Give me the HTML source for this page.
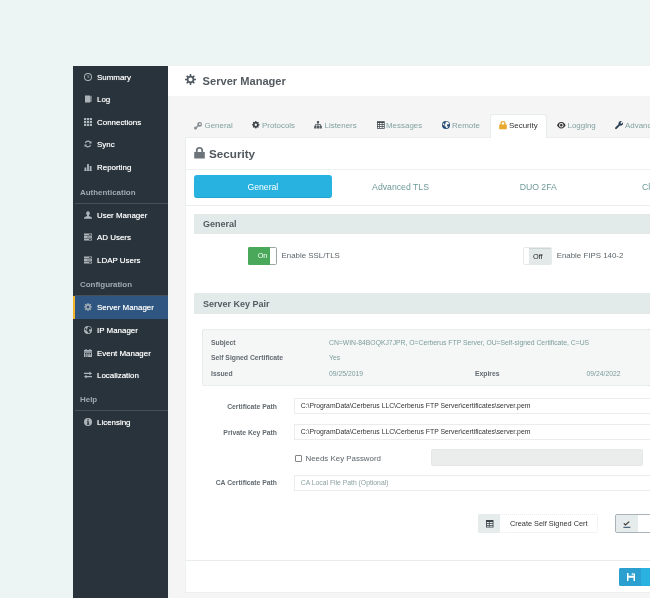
<!DOCTYPE html>
<html><head><meta charset="utf-8">
<style>
*{box-sizing:border-box;margin:0;padding:0}
html,body{width:650px;height:598px;overflow:hidden;background:#edf4f4;font-family:"Liberation Sans",sans-serif;}
body{will-change:transform}
svg{display:block;position:absolute;overflow:visible}
#side{position:absolute;left:73px;top:66px;width:95px;height:532px;background:#28333b;}
.nav{position:absolute;left:0;width:95px;height:23px;color:#fff;text-shadow:0 0 .7px rgba(255,255,255,.75);font-size:7.95px;line-height:23px;padding-left:24px;white-space:nowrap}
.nav svg{left:11.3px;top:7px;width:8px;height:8px;fill:#adb5ba}
.nav.active{background:#2f5680;border-left:2px solid #f0b429;padding-left:22px}
.nav.active svg{left:9.3px}
.grp{position:absolute;left:2px;width:93px;height:23px;color:#9fa9b0;font-size:7.95px;font-weight:bold;line-height:23px;padding-left:5px;border-bottom:1px solid #44515b}
#hdr{position:absolute;left:168px;top:66px;width:482px;height:30px;background:#fff}
#hdr span{position:absolute;left:34.6px;top:9px;font-size:11.1px;font-weight:bold;color:#525a60;white-space:nowrap}
#content{position:absolute;left:169.5px;top:96px;width:481px;height:502px;background:#f5f5f5}
.tab{position:absolute;top:121.3px;font-size:7.95px;line-height:10px;color:#81a2a0;white-space:nowrap}
#atab{position:absolute;left:490px;top:114.3px;width:56.6px;height:23.9px;background:#fff;border:1px solid #e6ebeb;border-bottom:none;border-radius:3px 3px 0 0}
#panel{position:absolute;left:184.6px;top:137px;width:466px;height:69px;background:#fff;border:1px solid #eaeeee;border-right:none}
#panel2{position:absolute;left:184.6px;top:206px;width:466px;height:353.6px;background:#fff;border-left:1px solid #eef1f1}
#foot{position:absolute;left:184.6px;top:561px;width:466px;height:31.6px;background:#fff;border-left:1px solid #eef1f1;border-bottom:1px solid #eceff0}
#gap{position:absolute;left:184.6px;top:559.6px;width:466px;height:1.4px;background:#e8ecec}
.bar{position:absolute;left:194px;width:456px;height:20.3px;background:#e3eaea;color:#535b61;font-weight:bold;font-size:9px;line-height:20.6px;padding-left:9px;white-space:nowrap}
.lbl{position:absolute;font-size:6.8px;line-height:9px;font-weight:bold;color:#626b71;white-space:nowrap}
.val{position:absolute;font-size:6.8px;line-height:9px;color:#7a9d9b;white-space:nowrap}
.inp{position:absolute;left:294px;width:356px;height:16px;border:1px solid #eaeded;border-right:none;background:#fff;font-size:6.8px;line-height:14px;padding-left:5.8px;color:#333;white-space:nowrap}
.pill{position:absolute;top:175.2px;width:137.7px;height:23.3px;font-size:8.7px;line-height:25.6px;text-align:center;color:#6d9a98;white-space:nowrap}
</style></head><body>
<div id="side">
<div class="nav" style="top:0"><svg viewBox="0 0 16 16"><path fill-rule="evenodd" d="M8 0a8 8 0 1 0 0 16a8 8 0 1 0 0-16Z M8 1.900a6.100 6.100 0 1 1 0 12.200a6.100 6.100 0 1 1 0-12.200Z"/><path d="M7.300 4h1.400v3.600h2.300v1.400H7.300Z"/></svg>Summary</div>
<div class="nav" style="top:22px"><svg viewBox="0 0 16 16"><path d="M2 1h10v14H2Z M12.6 2.5l2.4-1.5v12l-2.4 1.5Z"/></svg>Log</div>
<div class="nav" style="top:45px"><svg viewBox="0 0 16 16"><path d="M0 0h4.4v4.4H0Z M5.8 0h4.4v4.4H5.8Z M11.6 0H16v4.4h-4.4Z M0 5.8h4.4v4.4H0Z M5.8 5.8h4.4v4.4H5.8Z M11.6 5.8H16v4.4h-4.4Z M0 11.6h4.4V16H0Z M5.8 11.6h4.4V16H5.8Z M11.6 11.6H16V16h-4.4Z"/></svg>Connections</div>
<div class="nav" style="top:67px"><svg viewBox="0 0 16 16"><path d="M8 1.2a6.8 6.8 0 0 1 5.3 2.5L15 2v5.2H9.8l1.9-1.9A4.4 4.4 0 0 0 3.8 6.6L1.5 6A6.8 6.8 0 0 1 8 1.2Z M8 14.8a6.8 6.8 0 0 1-5.3-2.5L1 14V8.8h5.2l-1.9 1.9a4.4 4.4 0 0 0 7.9-1.3l2.3.6A6.8 6.8 0 0 1 8 14.8Z"/></svg>Sync</div>
<div class="nav" style="top:90px"><svg viewBox="0 0 16 16"><path d="M1 9h3.6v6H1Z M6.2 2h3.6v13H6.2Z M11.4 6H15v9h-3.6Z M0 15.2h16v.8H0Z"/></svg>Reporting</div>
<div class="grp" style="top:115px">Authentication</div>
<div class="nav" style="top:138px"><svg viewBox="0 0 16 16"><path d="M8 0.5c2.3 0 3.6 1.8 3.6 4.1c0 1.7-.8 3.3-1.8 4.1v1.1l4.6 2.1c.9.4 1.6 1.1 1.6 2.1V15.5H0V14c0-1 .7-1.700 1.600-2.100l4.600-2.100V8.700C5.200 7.900 4.400 6.300 4.400 4.600C4.400 2.300 5.700.5 8 .5Z"/></svg>User Manager</div>
<div class="nav" style="top:160px"><svg viewBox="0 0 16 16"><path d="M0 1h16v3.800H0Z M0 6.100h16v3.800H0Z M0 11.200h16V15H0Z"/><path fill="#28333b" d="M10 2.200h4.500v1.400H10Z M6 7.300h8.500v1.400H6Z M10 12.400h4.500v1.400H10Z"/></svg>AD Users</div>
<div class="nav" style="top:183px"><svg viewBox="0 0 16 16"><path d="M0 1h16v3.800H0Z M0 6.100h16v3.800H0Z M0 11.200h16V15H0Z"/><path fill="#28333b" d="M10 2.200h4.500v1.400H10Z M6 7.300h8.500v1.400H6Z M10 12.400h4.500v1.400H10Z"/></svg>LDAP Users</div>
<div class="grp" style="top:207px">Configuration</div>
<div class="nav active" style="top:230px"><svg viewBox="0 0 16 16"><path fill-rule="evenodd" d="M13.57 6.80 L15.93 6.94 L15.93 9.06 L13.57 9.20 L12.79 11.09 L14.36 12.85 L12.85 14.36 L11.09 12.79 L9.20 13.57 L9.06 15.93 L6.94 15.93 L6.80 13.57 L4.91 12.79 L3.15 14.36 L1.64 12.85 L3.21 11.09 L2.43 9.20 L0.07 9.06 L0.07 6.94 L2.43 6.80 L3.21 4.91 L1.64 3.15 L3.15 1.64 L4.91 3.21 L6.80 2.43 L6.94 0.07 L9.06 0.07 L9.20 2.43 L11.09 3.21 L12.85 1.64 L14.36 3.15 L12.79 4.91Z M5.00 8.00 a3.00 3.00 0 1 0 6.00 0 a3.00 3.00 0 1 0 -6.00 0Z"/></svg>Server Manager</div>
<div class="nav" style="top:253px"><svg viewBox="0 0 16 16"><path fill-rule="evenodd" d="M8 0a8 8 0 1 0 0 16a8 8 0 1 0 0-16Z M9.2 1.200c2.400.4 4.400 2 5.200 4.300l-1.900 1.400-1.600-.4-1 1.700.6 2.300 1.900.8 1.200-1.400c-.6 2.300-2.500 4.200-4.900 4.700l-1-3-2.300-1.200-.3-2.400 1.900-1.800-.6-2.300 1.400-1.400Z M2.200 4.500l2.200.6.600 1.800-1.800 1.600-1.600-.8c0-1.200.2-2.200.6-3.200Z"/></svg>IP Manager</div>
<div class="nav" style="top:276px"><svg viewBox="0 0 16 16"><path d="M0 2h16v3.500H0Z M0 6.500h16V16H0Z M3 0h2.200v3H3Z M10.800 0H13v3h-2.200Z"/><path class="hole" fill="#28333b" d="M2 8.200h2.200v1.600H2Z M5.300 8.200h2.200v1.600H5.300Z M8.600 8.200h2.200v1.600H8.600Z M11.900 8.200h2.200v1.600h-2.200Z M2 11h2.200v1.600H2Z M5.300 11h2.200v1.600H5.300Z M8.600 11h2.200v1.600H8.600Z M11.900 11h2.200v1.600h-2.200Z M2 13.600h2.200v1.400H2Z M5.300 13.600h2.200v1.400H5.300Z"/></svg>Event Manager</div>
<div class="nav" style="top:298px"><svg viewBox="0 0 16 16"><path d="M0 3.600h11V1l5 3.800-5 3.800V6H0Z M16 10h-11V7.400L0 11.200 5 15v-2.600h11Z"/></svg>Localization</div>
<div class="grp" style="top:322px">Help</div>
<div class="nav" style="top:345px"><svg viewBox="0 0 16 16"><path fill-rule="evenodd" d="M8 0a8 8 0 1 0 0 16a8 8 0 1 0 0-16Z M6.800 2.600h2.600v2.400H6.800Z M5.800 6.400h3.800v5.200h1.200v1.800H5.600v-1.800h1.200V8.200H5.800Z"/></svg>Licensing</div>
</div>
<div id="hdr"><span>Server Manager</span></div>
<div id="content"></div>
<div id="panel"></div>
<div id="panel2"></div>
<div id="foot"></div>
<div id="gap"></div>
<div id="atab"></div>
<div class="tab" style="left:204.5px">General</div>
<div class="tab" style="left:262px">Protocols</div>
<div class="tab" style="left:324.5px">Listeners</div>
<div class="tab" style="left:386px">Messages</div>
<div class="tab" style="left:452px">Remote</div>
<div class="tab" style="left:509px;color:#333">Security</div>
<div class="tab" style="left:567.5px">Logging</div>
<div class="tab" style="left:625px">Advanced</div>
<div style="position:absolute;left:209px;top:146px;font-size:11.7px;font-weight:bold;color:#50585e;line-height:16px">Security</div>
<div style="position:absolute;left:186px;top:169px;width:464px;height:1px;background:#eef1f1"></div>
<div class="pill" style="left:194px;background:#27b2e0;color:#fff;border-radius:3px;border-bottom:1px solid #22a3d2">General</div>
<div class="pill" style="left:331.7px">Advanced TLS</div>
<div class="pill" style="left:469.4px">DUO 2FA</div>
<div class="pill" style="left:607.1px">Client Certificates</div>

<div class="bar" style="top:213.8px;line-height:21.4px">General</div>
<div style="position:absolute;left:248px;top:247px;width:29px;height:17.5px;background:#fff;border:1px solid #9aa6a2;border-radius:1.5px"></div>
<div style="position:absolute;left:248px;top:247px;width:22px;height:17.5px;background:#49a859;border-radius:1.5px 0 0 1.5px;color:#fff;font-size:7.3px;line-height:18.5px;text-align:center;padding-left:7px">On</div>
<div class="val" style="left:281.5px;top:251px;font-size:7.9px;color:#5c656b">Enable SSL/TLS</div>
<div style="position:absolute;left:523px;top:247px;width:28.5px;height:17.5px;background:#fff;border:1px solid #e6eaea;border-radius:2px"></div>
<div style="position:absolute;left:529.3px;top:247.5px;width:22px;height:17px;background:#e3e8e8;border-top:1px solid #cfd6d6;color:#222;font-size:7.3px;line-height:15px;text-align:center;padding-right:5px">Off</div>
<div class="val" style="left:556.7px;top:251px;font-size:7.9px;color:#5c656b">Enable FIPS 140-2</div>

<div class="bar" style="top:293.4px;height:21px;line-height:22.4px">Server Key Pair</div>
<div style="position:absolute;left:202px;top:329px;width:448px;height:57px;background:#f5f6f6;border:1px dotted #dfe4e4;border-right:none;border-radius:2px 0 0 2px"></div>
<div class="lbl" style="left:211px;top:337.6px">Subject</div>
<div class="lbl" style="left:211px;top:353px">Self Signed Certificate</div>
<div class="lbl" style="left:211px;top:369px">Issued</div>
<div class="val" style="left:329px;top:337.6px">CN=WIN-84BOQKJ7JPR, O=Cerberus FTP Server, OU=Self-signed Certificate, C=US</div>
<div class="val" style="left:329px;top:353px">Yes</div>
<div class="val" style="left:329px;top:369px">09/25/2019</div>
<div class="lbl" style="left:475px;top:369px">Expires</div>
<div class="val" style="left:586.5px;top:369px">09/24/2022</div>

<div class="lbl" style="right:373px;top:402px">Certificate Path</div>
<div class="inp" style="top:398.2px">C:\ProgramData\Cerberus LLC\Cerberus FTP Server\certificates\server.pem</div>
<div class="lbl" style="right:373px;top:427.5px">Private Key Path</div>
<div class="inp" style="top:423.5px">C:\ProgramData\Cerberus LLC\Cerberus FTP Server\certificates\server.pem</div>
<div style="position:absolute;left:294.5px;top:455px;width:7.4px;height:7.4px;border:1px solid #858585;background:#fff;border-radius:1px"></div>
<div class="val" style="left:305.5px;top:454px;font-size:7.9px;line-height:10px;color:#5c656b">Needs Key Password</div>
<div style="position:absolute;left:431px;top:449px;width:212px;height:17px;background:#ebeded;border:1px dotted #e0e3e3;border-radius:2px"></div>
<div class="lbl" style="right:373px;top:478.3px">CA Certificate Path</div>
<div class="inp" style="top:474.7px;color:#8ca0a0">CA Local File Path (Optional)</div>

<div style="position:absolute;left:478px;top:514px;width:120px;height:19px;background:#fff;border:1px dotted #e6eaea;border-radius:2px"></div>
<div style="position:absolute;left:478px;top:514px;width:22px;height:19px;background:#e6ebeb;border-radius:2px 0 0 2px"></div>
<div style="position:absolute;left:510px;top:519px;font-size:7.35px;line-height:10px;color:#333;white-space:nowrap">Create Self Signed Cert</div>
<div style="position:absolute;left:615px;top:514px;width:40px;height:19px;background:#fff;border:1px solid #a9b2b8;border-radius:2px"></div>
<div style="position:absolute;left:616px;top:515px;width:22px;height:17px;background:#e6ebeb"></div>

<div style="position:absolute;left:619px;top:568px;width:31px;height:18px;background:#29b1e0;border-radius:2px 0 0 2px"></div>
<div style="position:absolute;left:619px;top:568px;width:22px;height:18px;background:#2a9fd0;border-radius:2px 0 0 2px"></div>

<svg viewBox="0 0 16 16" style="left:185.3px;top:74.4px;width:11px;height:11px;fill:#505962"><path fill-rule="evenodd" d="M13.57 6.80 L15.93 6.94 L15.93 9.06 L13.57 9.20 L12.79 11.09 L14.36 12.85 L12.85 14.36 L11.09 12.79 L9.20 13.57 L9.06 15.93 L6.94 15.93 L6.80 13.57 L4.91 12.79 L3.15 14.36 L1.64 12.85 L3.21 11.09 L2.43 9.20 L0.07 9.06 L0.07 6.94 L2.43 6.80 L3.21 4.91 L1.64 3.15 L3.15 1.64 L4.91 3.21 L6.80 2.43 L6.94 0.07 L9.06 0.07 L9.20 2.43 L11.09 3.21 L12.85 1.64 L14.36 3.15 L12.79 4.91Z M5.00 8.00 a3.00 3.00 0 1 0 6.00 0 a3.00 3.00 0 1 0 -6.00 0Z"/></svg>
<svg viewBox="0 0 16 15" style="left:194.4px;top:121.5px;width:8px;height:7.6px;fill:#848b90"><path fill-rule="evenodd" d="M11.200 0a4.800 4.800 0 1 1 0 9.600a4.800 4.800 0 1 1 0-9.600Z M11.800 2.300a1.900 1.900 0 1 0 0 3.800a1.900 1.900 0 1 0 0-3.800Z"/><circle cx="3.100" cy="11.900" r="3"/><path d="M4.200 9.200l3-2.600 2 2-2.800 2.900Z"/></svg>
<svg viewBox="0 0 16 16" style="left:252px;top:121.2px;width:7.6px;height:7.6px;fill:#394147"><path fill-rule="evenodd" d="M14.16 6.67 L15.93 6.94 L15.93 9.06 L14.16 9.33 L13.29 11.42 L14.36 12.85 L12.85 14.36 L11.42 13.29 L9.33 14.16 L9.06 15.93 L6.94 15.93 L6.67 14.16 L4.58 13.29 L3.15 14.36 L1.64 12.85 L2.71 11.42 L1.84 9.33 L0.07 9.06 L0.07 6.94 L1.84 6.67 L2.71 4.58 L1.64 3.15 L3.15 1.64 L4.58 2.71 L6.67 1.84 L6.94 0.07 L9.06 0.07 L9.33 1.84 L11.42 2.71 L12.85 1.64 L14.36 3.15 L13.29 4.58Z M5.50 8.00 a2.50 2.50 0 1 0 5.00 0 a2.50 2.50 0 1 0 -5.00 0Z"/></svg>
<svg viewBox="0.4 0 15.2 15" style="left:314.3px;top:121.3px;width:8px;height:7.6px;fill:#555d63"><path d="M5.800 0h4.400v4.400H8.800v2H14v3h1.600V15h-4.600V9.400h1.400V8H8.800v1.400h1.400V15H5.800V9.400h1.400V8H3.600v1.400H5V15H.4V9.400H2v-3h5.200v-2H5.800Z"/></svg>
<svg viewBox="0 0 16 16" style="left:376.8px;top:121px;width:7.7px;height:8px;fill:#3e464c"><path fill-rule="evenodd" d="M0 0h16v16H0Z M1.600 4h3v2.600h-3Z M6 4h4v2.600H6Z M11.400 4h3v2.600h-3Z M1.600 8h3v2.600h-3Z M6 8h4v2.600H6Z M11.400 8h3v2.600h-3Z M1.600 12h3v2.400h-3Z M6 12h4v2.400H6Z M11.400 12h3v2.400h-3Z"/></svg>
<svg viewBox="0 0 16 16" style="left:442px;top:121px;width:8px;height:8px;fill:#234a75"><path fill-rule="evenodd" d="M8 0a8 8 0 1 0 0 16a8 8 0 1 0 0-16Z M9.2 1.200c2.400.4 4.400 2 5.200 4.300l-1.900 1.400-1.600-.4-1 1.700.6 2.300 1.900.8 1.200-1.400c-.6 2.300-2.500 4.200-4.900 4.700l-1-3-2.300-1.200-.3-2.400 1.900-1.800-.6-2.300 1.400-1.400Z M2.200 4.500l2.200.6.600 1.800-1.800 1.600-1.600-.8c0-1.200.2-2.200.6-3.200Z"/></svg>
<svg viewBox="1 0.4 14 15.2" style="left:498.6px;top:120.8px;width:8px;height:8.2px;fill:#e8a82b"><path fill-rule="evenodd" d="M3.200 7V4.800C3.200 2 5.300.4 8 .4s4.800 1.600 4.800 4.400V7H15v8.600H1V7Z M5.600 7h4.800V4.800c0-1.300-1-2.100-2.400-2.100S5.600 3.500 5.600 4.800Z"/></svg>
<svg viewBox="0 0 16 12" style="left:557px;top:122px;width:8.6px;height:6.5px;fill:#333"><path fill-rule="evenodd" d="M8 0c4 0 7 3.500 8 6c-1 2.500-4 6-8 6S1 8.500 0 6C1 3.500 4 0 8 0Z M8 1.800a4.200 4.200 0 1 0 0 8.400a4.200 4.200 0 1 0 0-8.400Z M8 3.600a2.400 2.400 0 1 1 0 4.800a2.400 2.400 0 1 1 0-4.800Z"/></svg>
<svg viewBox="0 0 16 16" style="left:615px;top:121px;width:8px;height:8px;fill:#2a3f55"><path d="M11.500 0c.8 0 1.500.2 2.200.5L11 3.200l.4 1.800 1.800.4 2.700-2.700c.3.700.1 1.400.1 2.200 0 2.500-2 4.500-4.500 4.500-.5 0-1-.1-1.500-.3L3.400 15.700c-.8.800-2 .8-2.800 0s-.8-2 0-2.800L7.200 6.300C7 5.800 7 5.300 7 4.800 7 2.100 9 0 11.500 0Z"/></svg>
<svg viewBox="1 0.4 14 15.2" style="left:193.6px;top:147.2px;width:11px;height:11.5px;fill:#6c747a"><path fill-rule="evenodd" d="M3.200 7V4.800C3.200 2 5.300.4 8 .4s4.800 1.600 4.800 4.400V7H15v8.600H1V7Z M5.600 7h4.800V4.800c0-1.300-1-2.100-2.400-2.100S5.600 3.500 5.600 4.800Z"/></svg>
<svg viewBox="0 0 16 16" style="left:485.5px;top:520px;width:7.5px;height:7.5px;fill:#3e464c"><path fill-rule="evenodd" d="M0 0h16v16H0Z M1.800 4.500h4.400v2.600H1.800Z M7.800 4.500h6.400v2.600H7.800Z M1.800 8.700h4.400v2.400H1.800Z M7.800 8.700h6.400v2.400H7.800Z M1.800 12.600h4.400v1.800H1.800Z M7.800 12.600h6.400v1.800H7.800Z"/></svg>
<svg viewBox="0 0 16 16" style="left:627px;top:573px;width:8px;height:8px;fill:#fff"><path fill-rule="evenodd" d="M0 0h3v5.500h10V0h1l2 2v14H0Z M9.500 0h2v4h-2Z M3 9.500h10V16H3Z"/></svg>
<svg viewBox="0 0 8 8" style="left:622.6px;top:520.8px;width:8px;height:8px"><path d="M0.800 2.400L2.400 4L6.200.6" fill="none" stroke="#333" stroke-width="1.100"/><path d="M.4 6.300h7" stroke="#2b4a66" stroke-width="1" fill="none"/></svg>
</body></html>
